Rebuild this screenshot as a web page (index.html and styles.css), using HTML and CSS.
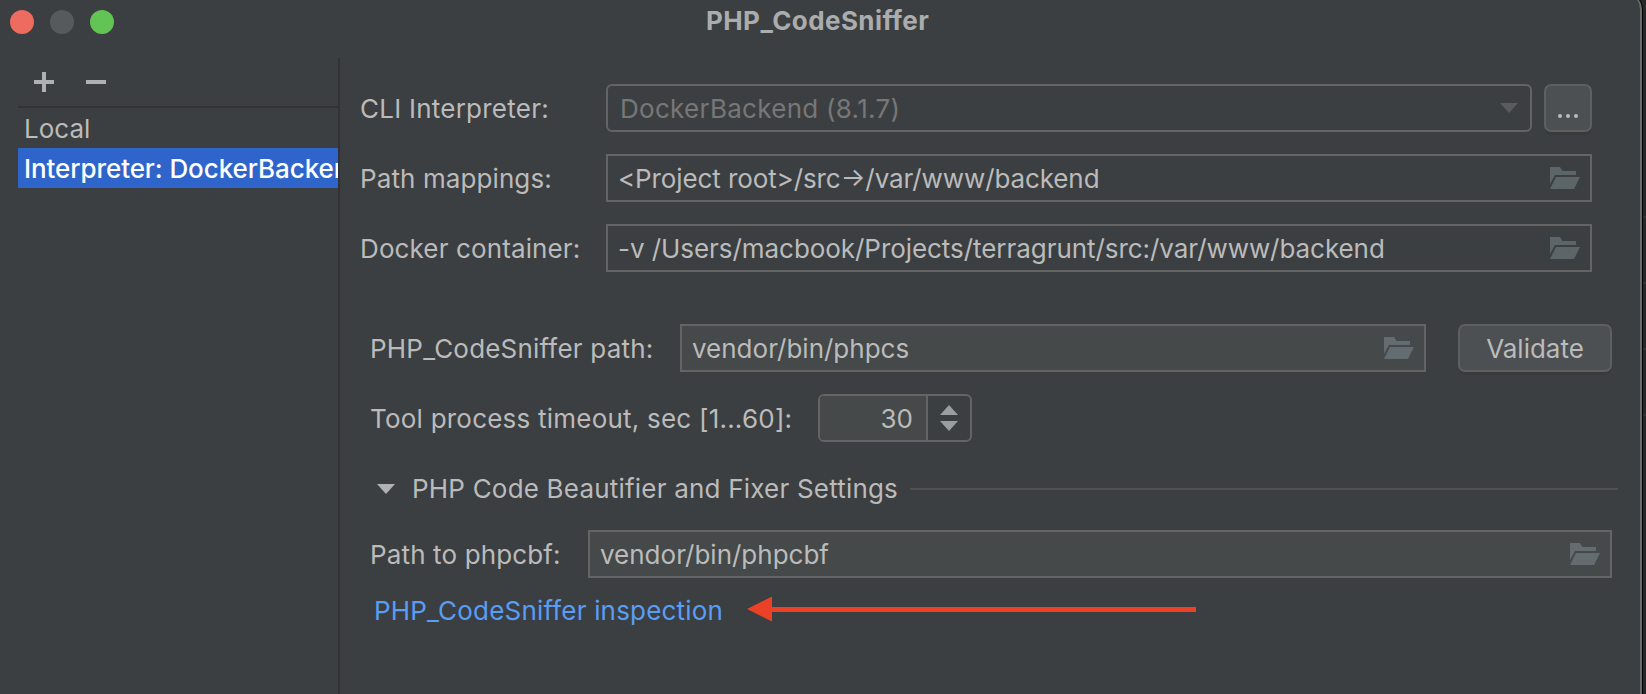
FILE: index.html
```html
<!DOCTYPE html>
<html lang="en">
<head>
<meta charset="utf-8">
<title>PHP_CodeSniffer</title>
<link rel="stylesheet" href="styles.css">
</head>
<body>
<svg class="defs" width="0" height="0" aria-hidden="true">
  <symbol id="folder" viewBox="0 0 30 22">
    <path d="M0 0H10L12.5 4H26V8H5L0 17Z"/>
    <path d="M6 10H30L24 22H0Z"/>
  </symbol>
</svg>
<div class="window">
  <header class="titlebar">
    <div class="lights"><i class="light close"></i><i class="light minimize"></i><i class="light zoom"></i></div>
    <h1 class="title">PHP_CodeSniffer</h1>
  </header>
  <div class="body">
    <aside class="sidebar">
      <div class="toolbar">
        <svg width="20" height="20" viewBox="0 0 20 20"><path d="M8 0H12V8H20V12H12V20H8V12H0V8H8Z"/></svg>
        <svg width="20" height="20" viewBox="0 0 20 20"><path d="M0 8H20V12H0Z"/></svg>
      </div>
      <ul class="list">
        <li class="item">Local</li>
        <li class="item selected">Interpreter: DockerBackend</li>
      </ul>
    </aside>
    <main class="panel">
      <section class="group docker">
        <div class="row">
          <label class="label"><span class="text t-cli">CLI Interpreter:</span></label>
          <div class="field combo"><span class="text t-combo">DockerBackend (8.1.7)</span><svg width="18" height="10" viewBox="0 0 18 10"><path d="M0 0H18L9 10Z"/></svg></div>
          <button class="button more"><svg width="20" height="4" viewBox="0 0 20 4"><circle cx="2" cy="2" r="2"/><circle cx="10" cy="2" r="2"/><circle cx="18" cy="2" r="2"/></svg></button>
        </div>
        <div class="row">
          <label class="label"><span class="text t-map">Path mappings:</span></label>
          <div class="field readonly"><span class="text t-root">&lt;Project root&gt;/src<span class="maps-to">→</span>/var/www/backend</span><svg class="folder"><use href="#folder"/></svg></div>
        </div>
        <div class="row">
          <label class="label"><span class="text t-cont">Docker container:</span></label>
          <div class="field readonly"><span class="text t-vol">-v /Users/macbook/Projects/terragrunt/src:/var/www/backend</span><svg class="folder"><use href="#folder"/></svg></div>
        </div>
      </section>
      <section class="group tool">
        <div class="row">
          <label class="label cs"><span class="text t-cs">PHP_CodeSniffer path:</span></label>
          <div class="field"><span class="text">vendor/bin/phpcs</span><svg class="folder"><use href="#folder"/></svg></div>
          <button class="button validate"><span class="text">Validate</span></button>
        </div>
        <div class="row">
          <label class="label timeout"><span class="text t-time">Tool process timeout, sec [1...60]:</span></label>
          <div class="spinner">
            <div class="value">30</div>
            <div class="arrows"><svg width="18" height="26" viewBox="0 0 18 26"><path d="M9 0L18 10H0ZM0 16H18L9 26Z"/></svg></div>
          </div>
        </div>
        <div class="heading">
          <svg width="18" height="10" viewBox="0 0 18 10"><path d="M0 0H18L9 10Z"/></svg>
          <h2 class="heading-text">PHP Code Beautifier and Fixer Settings</h2>
          <div class="rule"></div>
        </div>
        <div class="row fixer">
          <label class="label cbf"><span class="text t-cbf">Path to phpcbf:</span></label>
          <div class="field"><span class="text">vendor/bin/phpcbf</span><svg class="folder"><use href="#folder"/></svg></div>
        </div>
        <div class="inspection">
          <a class="link"><span class="text t-link">PHP_CodeSniffer inspection</span></a>
          <svg class="arrow" width="450" height="26" viewBox="0 0 450 26"><path d="M0 13L25 0.5V11H449V16H25V25.5Z"/></svg>
        </div>
      </section>
    </main>
  </div>
</div>
</body>
</html>
```
FILE: styles.css
```css
* { box-sizing: border-box; }
body {
  margin: 0;
  height: 694px;
  overflow: hidden;
  background: repeating-linear-gradient(#303232 0 2px, #262727 2px 66px) 0 216px / 100% 200px no-repeat, #262727;
  font: 26px/40px Inter, "Liberation Sans", sans-serif;
  color: #bbbbbb;
}
.defs { display: block; height: 0; }
.window {
  width: 1642px;
  height: 720px;
  margin-top: -8px;
  padding-top: 8px;
  background: #3c3f41;
  border-right: 2px solid #6a6c6d;
  border-radius: 10px 18px 0 0;
  box-shadow: 1px 0 0 #000;
}
.titlebar { display: flex; align-items: center; height: 44px; padding: 0 10px; position: relative; }
.lights { display: flex; gap: 16px; }
.light { width: 24px; height: 24px; border-radius: 50%; }
.close { background: #ed6b5f; }
.minimize { background: #565a5c; }
.zoom { background: #61c454; }
.title { position: absolute; left: 706px; top: 1px; margin: 0; font-size: 26px; font-weight: 700; letter-spacing: 0.42px; color: #aaacad; white-space: nowrap; }
.body { display: flex; margin-top: 14px; height: 640px; }
.sidebar { flex: none; width: 340px; padding-left: 18px; border-right: 2px solid #323232; }
.toolbar { display: flex; gap: 32px; height: 50px; padding: 14px 16px 0; border-bottom: 2px solid #323232; }
.toolbar svg { fill: #afb1b3; }
.list { margin: 0; padding: 0; list-style: none; }
.item { height: 40px; padding: 1px 0 0 6px; overflow: hidden; white-space: nowrap; }
.selected { background: #2f65ca; color: #fff; font-weight: 500; letter-spacing: -0.09px; }
.panel { flex: 1; padding-top: 26px; }
.group { display: flex; flex-direction: column; gap: 22px; }
.docker { padding: 0 48px 0 20px; }
.tool { padding: 52px 28px 0 30px; }
.row { display: flex; height: 48px; align-items: center; }
.text { display: block; padding-top: 2px; }
.t-cli { letter-spacing: 0.24px; }
.t-combo { letter-spacing: 0.28px; }
.t-map { letter-spacing: 0.1px; }
.t-root { letter-spacing: -0.1px; }
.maps-to { line-height: 0; vertical-align: 2px; }
.t-cont { letter-spacing: 0.12px; }
.t-vol { letter-spacing: -0.055px; }
.t-cs { letter-spacing: 0.2px; }
.t-time { letter-spacing: 0.22px; }
.t-cbf { letter-spacing: 0.14px; }
.t-link { letter-spacing: 0.19px; }
.label { flex: none; width: 246px; white-space: nowrap; }
.cs { width: 310px; }
.timeout { width: 448px; }
.cbf { width: 218px; }
.field { flex: 1; display: flex; align-items: center; justify-content: space-between; height: 48px; padding: 0 10px; border: 2px solid #646464; background: #45494a; white-space: nowrap; }
.readonly, .combo { background: #3c3f41; }
.combo { border-radius: 6px; padding: 0 12px; color: #777777; }
.combo svg { fill: #5a5b5c; }
.folder { width: 30px; height: 22px; fill: #5c6568; }
.tool .folder { fill: #636c70; }
.button { height: 48px; padding: 0; border: 2px solid #5e6060; border-radius: 7px; background: #4c5052; box-shadow: 0 4px 0 -1px #383a3b; color: #bbbbbb; font: inherit; }
.more { width: 48px; margin-left: 12px; display: flex; justify-content: center; padding-top: 28px; }
.more svg { fill: #bbbbbb; }
.validate { width: 154px; margin-left: 32px; }
.spinner { display: flex; width: 154px; height: 48px; border: 2px solid #646464; border-radius: 6px; overflow: hidden; }
.value { flex: 1; padding: 3px 13px 0 0; text-align: right; background: #45494a; border-right: 2px solid #646464; }
.arrows { width: 42px; display: flex; align-items: center; justify-content: center; }
.arrows svg { fill: #9b9ea1; }
.heading { display: flex; align-items: center; height: 44px; margin: 3px -6px -3px 7px; }
.heading svg { fill: #afb1b3; }
.heading-text { width: 498px; margin: 0 0 0 17px; font: inherit; letter-spacing: 0.2px; white-space: nowrap; }
.rule { flex: 1; height: 2px; background: #515151; }
.inspection { display: flex; align-items: center; height: 40px; margin: -10px 0 0 4px; }
.link { width: 373px; color: #589df6; white-space: nowrap; }
.arrow { fill: #eb4127; margin-top: -2px; }
```
